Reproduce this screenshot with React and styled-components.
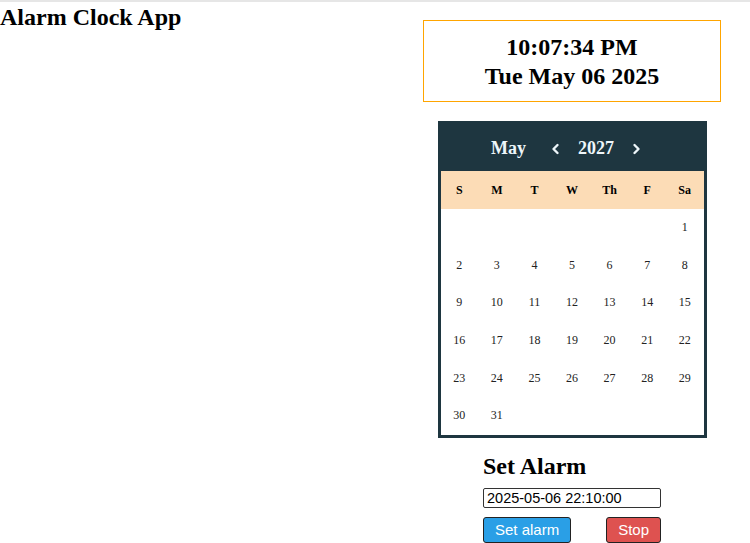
import React from "react";
import styled, { createGlobalStyle } from "styled-components";

const GlobalStyle = createGlobalStyle`
  html, body {
    margin: 0;
    padding: 0;
    background: #fff;
    font-family: "Liberation Serif", "Times New Roman", serif;
    color: #000;
  }
  body {
    border-top: 2px solid #e6e6e6;
  }
`;

const weekDays = ["S", "M", "T", "W", "Th", "F", "Sa"];

// May 2027 starts on a Saturday
const buildDays = () => {
  const cells = Array(6).fill(null);
  for (let d = 1; d <= 31; d++) cells.push(d);
  while (cells.length % 7) cells.push(null);
  return cells;
};

const Chevron = ({ dir }) => (
  <svg width="9" height="12" viewBox="0 0 9 12">
    <path
      d={dir === "left" ? "M6.5 2 L2.5 6 L6.5 10" : "M2.5 2 L6.5 6 L2.5 10"}
      fill="none"
      stroke="currentColor"
      strokeWidth="2.4"
      strokeLinecap="round"
      strokeLinejoin="round"
    />
  </svg>
);

export default function App() {
  const days = buildDays();
  return (
    <Page>
      <GlobalStyle />
      <Title>Alarm Clock App</Title>
      <RightColumn>
        <ClockBox>
          <div>10:07:34 PM</div>
          <div>Tue May 06 2025</div>
        </ClockBox>

        <Calendar>
          <CalHeader>
            <Month>May</Month>
            <NavButton>
              <Chevron dir="left" />
            </NavButton>
            <Year>2027</Year>
            <NavButton>
              <Chevron dir="right" />
            </NavButton>
          </CalHeader>
          <Grid>
            {weekDays.map(w => (
              <WeekDay key={w}>{w}</WeekDay>
            ))}
            {days.map((d, i) => (
              <Day key={i}>{d}</Day>
            ))}
          </Grid>
        </Calendar>

        <AlarmSection>
          <AlarmTitle>Set Alarm</AlarmTitle>
          <AlarmInput defaultValue="2025-05-06 22:10:00" />
          <ButtonRow>
            <ActionButton color="#2a9fe6">Set alarm</ActionButton>
            <ActionButton color="#de5250">Stop</ActionButton>
          </ButtonRow>
        </AlarmSection>
      </RightColumn>
    </Page>
  );
}

const Page = styled.div`
  display: flex;
  justify-content: space-between;
  align-items: flex-start;
  width: 750px;
`;

const Title = styled.h2`
  margin: 0;
  font-size: 24px;
  line-height: 30px;
  font-weight: bold;
`;

const RightColumn = styled.div`
  width: 298px;
  margin-right: 29px;
  margin-top: 18px;
  display: flex;
  flex-direction: column;
  align-items: center;
`;

const ClockBox = styled.div`
  box-sizing: border-box;
  width: 298px;
  height: 82px;
  border: 1px solid #ffa500;
  padding-top: 12px;
  text-align: center;
  font-size: 24px;
  font-weight: bold;
  line-height: 29px;
`;

const Calendar = styled.div`
  margin-top: 19px;
  width: 263px;
  border: 3px solid #1e3640;
  background: #fff;
`;

const CalHeader = styled.div`
  box-sizing: border-box;
  height: 47px;
  background: #1e3640;
  color: #eef6fa;
  display: flex;
  align-items: center;
  justify-content: center;
  font-size: 18px;
  font-weight: bold;
  padding: 2px 12px 0 0;
`;

const Month = styled.span`
  margin-right: 25px;
`;

const Year = styled.span`
  margin: 0 18px 0 18px;
`;

const NavButton = styled.span`
  display: flex;
  align-items: center;
  cursor: pointer;
`;

const Grid = styled.div`
  display: grid;
  grid-template-columns: repeat(7, 1fr);
  grid-auto-rows: 37.7px;
`;

const WeekDay = styled.div`
  background: #fcdcb6;
  height: 38px;
  display: flex;
  align-items: center;
  justify-content: center;
  font-size: 12px;
  font-weight: bold;
`;

const Day = styled.div`
  display: flex;
  align-items: center;
  justify-content: center;
  font-size: 12px;
  color: #222;
`;

const AlarmSection = styled.div`
  width: 178px;
  margin-top: 14px;
  display: flex;
  flex-direction: column;
`;

const AlarmTitle = styled.h2`
  margin: 0 0 8px;
  font-size: 24px;
  line-height: 28px;
  font-weight: bold;
`;

const AlarmInput = styled.input`
  box-sizing: border-box;
  width: 178px;
  height: 20px;
  border: 1px solid #333;
  border-radius: 2px;
  padding: 0 3px;
  font-family: "Liberation Sans", Arial, sans-serif;
  font-size: 14.5px;
  color: #000;
`;

const ButtonRow = styled.div`
  margin-top: 9px;
  display: flex;
  justify-content: space-between;
`;

const ActionButton = styled.button`
  height: 26px;
  padding: 0 11px;
  background: ${p => p.color};
  color: #fff;
  border: 1px solid #222;
  border-radius: 3px;
  font-family: "Liberation Sans", Arial, sans-serif;
  font-size: 15px;
`;
